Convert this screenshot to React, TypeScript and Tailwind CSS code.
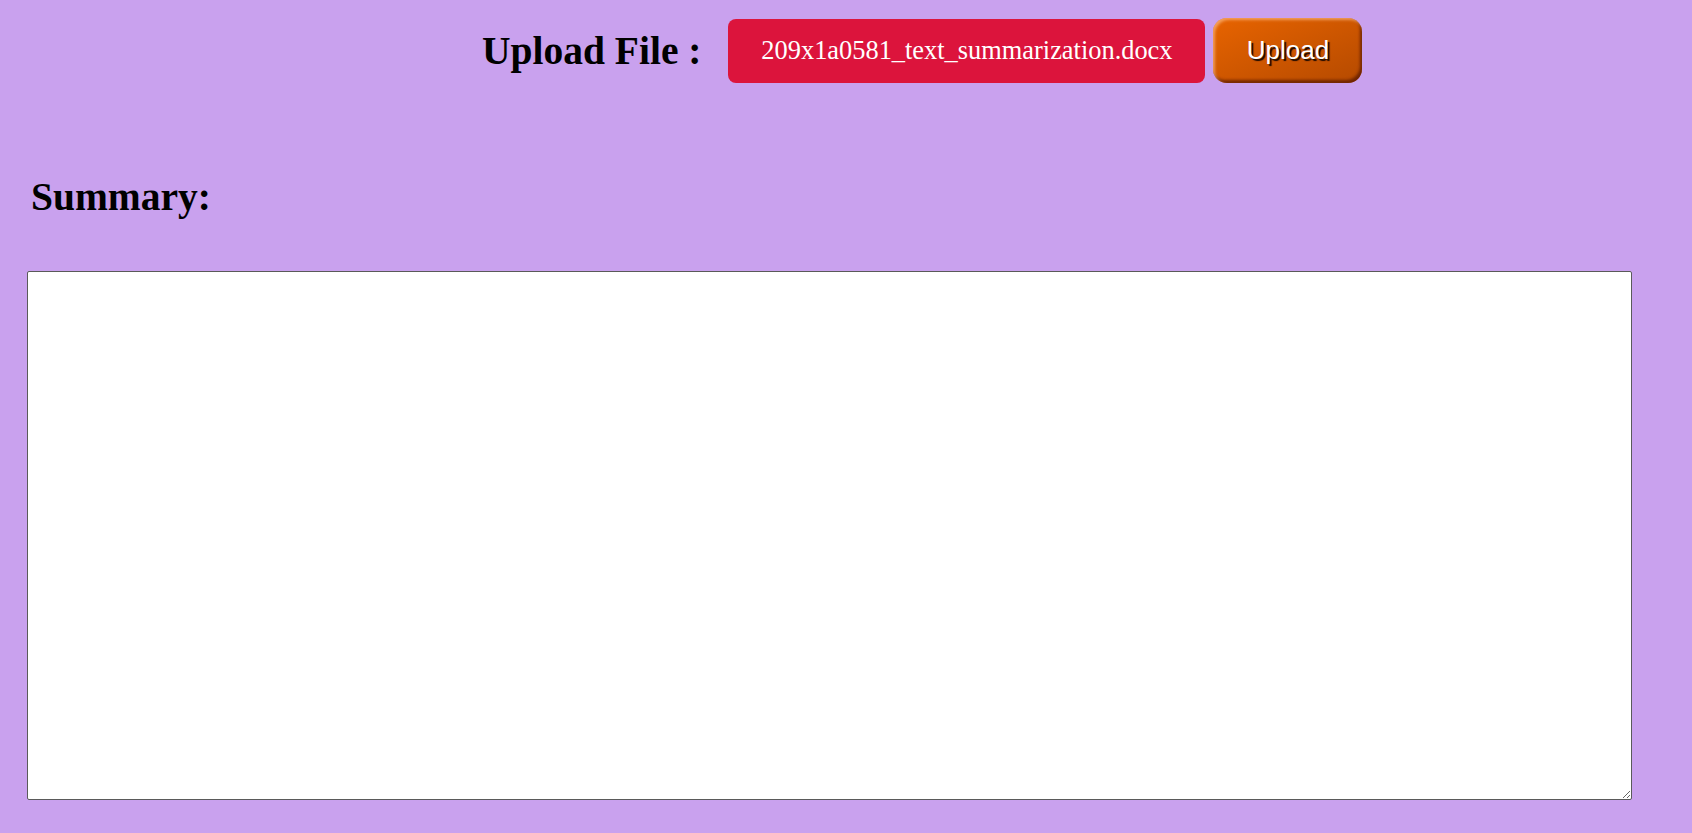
export default function App() {
  return (
    <div className="min-h-[833px] w-full bg-[#c9a1ee] font-['Liberation_Serif',serif] text-black">
      {/* Upload row */}
      <div className="flex items-center pl-[482px] pt-[18px]">
        <h1 className="mt-[2px] text-[39.5px] font-bold leading-none">Upload File :</h1>
        <div className="ml-[27px] flex h-[64px] w-[477px] items-center justify-center rounded-[8px] bg-[#dc143c] text-[26.4px] text-white">
          209x1a0581_text_summarization.docx
        </div>
        <button className="ml-[8px] h-[65px] w-[149px] rounded-[14px] bg-gradient-to-br from-[#e86400] to-[#b54a00] font-['Liberation_Sans',Arial,sans-serif] text-[26px] text-white shadow-[inset_2px_2px_3px_rgba(255,200,150,0.6),inset_-2px_-3px_3px_rgba(80,20,0,0.7)] [text-shadow:2px_2px_1px_#1a0800]">
          Upload
        </button>
      </div>

      {/* Summary */}
      <h2 className="ml-[31px] mt-[95px] text-[39.5px] font-bold leading-none">Summary:</h2>
      <div className="px-[27px] pt-[53px] pb-[27px]">
        <textarea className="block h-[529px] w-[1605px] rounded-[2px] border border-[#5a5a5a] bg-white" />
      </div>
    </div>
  );
}
